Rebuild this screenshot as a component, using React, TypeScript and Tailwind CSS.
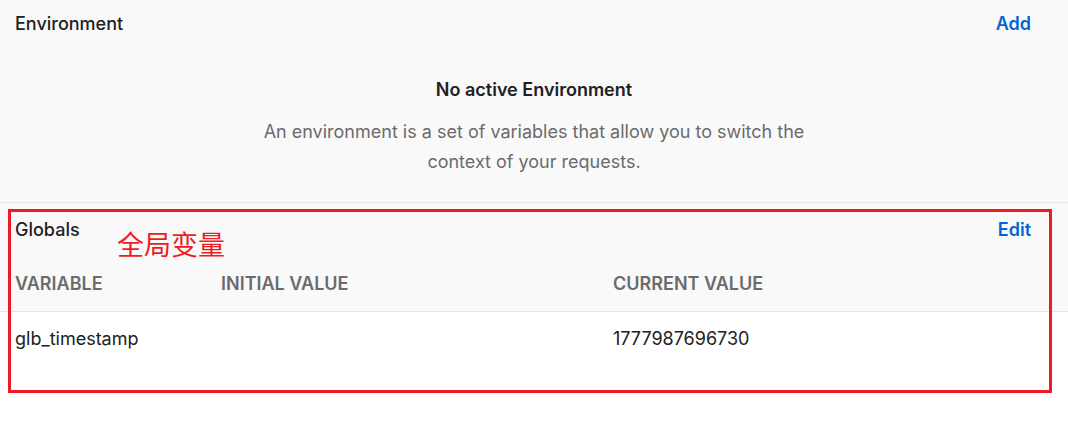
import React from 'react';

const globals = [{ key: 'glb_timestamp', initial: '', current: '1777987696730' }];

export default function App() {
  return (
    <div className="relative w-[1068px] h-[441px] bg-white text-[#212121] font-['Inter','Noto_Sans_CJK_SC',sans-serif]">
      {/* Environment section */}
      <div className="bg-[#f9f9f9] border-b border-[#e6e6e6] h-[203px]">
        <div className="flex items-center justify-between pl-[15px] pr-[37px] pt-[12px]">
          <h2 className="text-[18px] leading-[24px] font-medium">Environment</h2>
          <button className="text-[18px] leading-[24px] font-semibold text-[#0265d2]">Add</button>
        </div>
        <div className="flex flex-col items-center mt-[42px] text-center">
          <p className="text-[18px] leading-[24px] font-semibold">No active Environment</p>
          <p className="mt-[15px] max-w-[555px] text-[18px] leading-[30px] text-[#6b6b6b]">
            An environment is a set of variables that allow you to switch the context of your requests.
          </p>
        </div>
      </div>

      {/* Globals section */}
      <div>
        <div className="bg-[#f9f9f9] border-b border-[#e6e6e6]">
          <div className="flex items-center justify-between pl-[15px] pr-[37px] pt-[15px]">
            <h2 className="text-[18px] leading-[24px] font-medium">Globals</h2>
            <button className="text-[18px] leading-[24px] font-semibold text-[#0265d2]">Edit</button>
          </div>
          <div className="grid grid-cols-[206px_392px_1fr] px-[15px] pt-[30px] pb-[15px] text-[18px] leading-[24px] font-semibold text-[#6b6b6b] uppercase">
            <span>Variable</span>
            <span>Initial value</span>
            <span>Current value</span>
          </div>
        </div>
        {globals.map(g => (
          <div key={g.key} className="grid grid-cols-[206px_392px_1fr] px-[15px] pt-[15px] pb-[14px] text-[18px] leading-[24px]">
            <span>{g.key}</span>
            <span>{g.initial}</span>
            <span>{g.current}</span>
          </div>
        ))}
      </div>

      {/* annotation overlay */}
      <div className="absolute left-[8px] top-[209px] w-[1044px] h-[184px] border-[3px] border-[#ed1c24] pointer-events-none" />
      <span className="absolute left-[117px] top-[228px] text-[27px] leading-[32px] text-[#ed1c24] font-['Noto_Sans_CJK_SC',sans-serif]">
        全局变量
      </span>
    </div>
  );
}
